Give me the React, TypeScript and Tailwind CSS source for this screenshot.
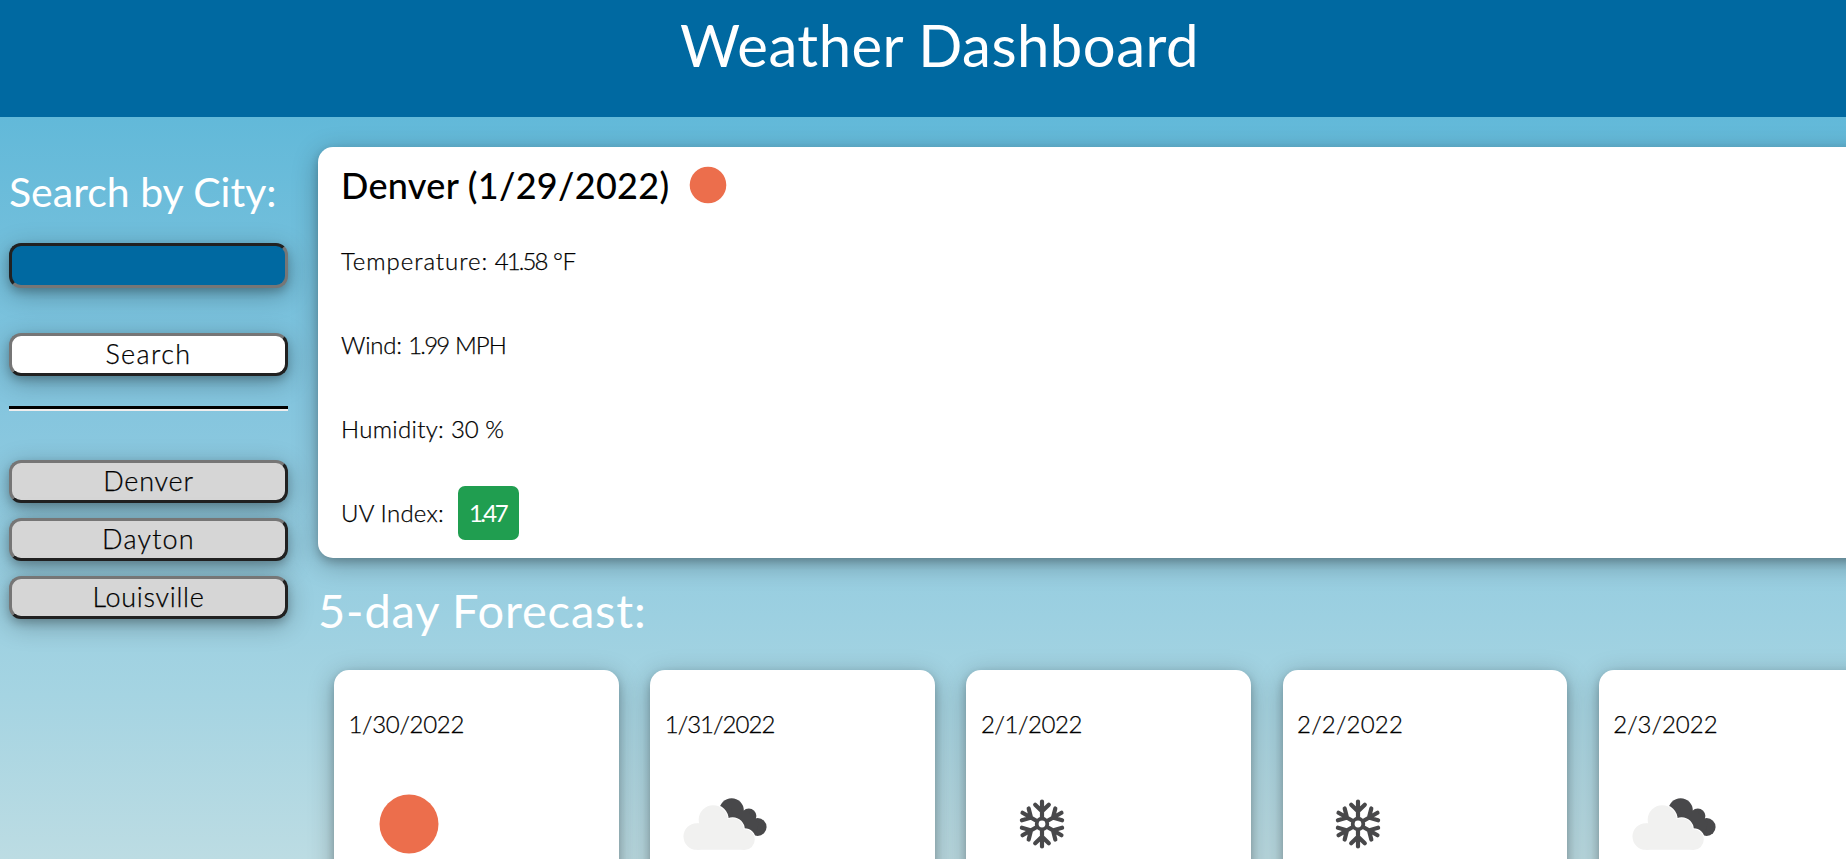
const days = [
  { date: "1/30/2022", icon: "sun", tracking: "tracking-[-0.3px]" },
  { date: "1/31/2022", icon: "cloud", tracking: "tracking-[-0.95px]" },
  { date: "2/1/2022", icon: "snow", tracking: "tracking-[-0.4px]" },
  { date: "2/2/2022", icon: "snow", tracking: "tracking-[0.2px]" },
  { date: "2/3/2022", icon: "cloud", tracking: "tracking-[0px]" },
];

const cities = [
  { name: "Denver", tracking: "tracking-[0.8px]" },
  { name: "Dayton", tracking: "tracking-[1.2px]" },
  { name: "Louisville", tracking: "tracking-[0.7px]" },
];

const shadow = "shadow-[0_4px_8px_rgba(0,0,0,0.2),0_6px_26px_rgba(0,0,0,0.28)]";
const thin = "font-light [-webkit-text-stroke:0.25px_#000]";
const outset =
  "h-[43px] w-[279px] rounded-[12px] border-3 border-t-[#767676] border-l-[#767676] border-r-[#212121] border-b-[#212121] pb-[2px] text-[27px] leading-[35px]";

function Sun({ className }: { className: string }) {
  return (
    <svg viewBox="0 0 100 100" className={className}>
      <circle cx="50" cy="50" r="29.5" fill="#ec6e4c" />
    </svg>
  );
}

function CloudShape() {
  return (
    <>
      <circle cx="21.8" cy="62.5" r="13.3" />
      <circle cx="38.2" cy="45.8" r="14.5" />
      <circle cx="57.6" cy="55.5" r="11.2" />
      <circle cx="69.5" cy="65.6" r="10.3" />
      <path d="M21.8 49.5H57L69.5 65V75.8H21.8Z" />
    </>
  );
}

function Cloud({ className }: { className: string }) {
  return (
    <svg viewBox="0 0 100 100" className={className}>
      <g fill="#48484a">
        <circle cx="56.6" cy="36.4" r="12.2" />
        <circle cx="73.8" cy="42" r="7.6" />
        <circle cx="82.6" cy="53" r="9" />
        <path d="M56 34L74 38L84 50L80 61.5L60 52Z" />
      </g>
      <g fill="#fff" stroke="#fff" strokeWidth="2">
        <CloudShape />
      </g>
      <g fill="#f1f1f0">
        <CloudShape />
      </g>
    </svg>
  );
}

function Snow({ className }: { className: string }) {
  return (
    <svg viewBox="0 0 100 100" className={className} fill="none" stroke="#48484a" strokeWidth="4.2" strokeLinecap="round">
      <circle cx="50" cy="50" r="5.3" strokeWidth="3.8" />
      {[0, 60, 120, 180, 240, 300].map((a) => (
        <path key={a} transform={`rotate(${a} 50 50)`} d="M50 44V27.5M43.2 30.7L50 37.3L56.8 30.7" />
      ))}
    </svg>
  );
}

const icons = { sun: Sun, cloud: Cloud, snow: Snow } as Record<string, typeof Sun>;

export default function App() {
  return (
    <div className="flex h-[859px] w-[1846px] flex-col overflow-hidden bg-[#62b9d9] font-['Lato',sans-serif] text-black">
      <header className="flex h-[117px] shrink-0 justify-center bg-[#0069a1] pl-[33px] pt-[9px]">
        <h1 className="text-[58px] leading-[72px] tracking-[0.48px] text-white">Weather Dashboard</h1>
      </header>
      <div className="flex h-[742px] bg-[linear-gradient(180deg,#62b9d9_0%,#84c5de_38%,#a5d4e2_78%,#bcdce3_100%)]">
        <aside className="flex w-[288px] shrink-0 flex-col pl-[9px]">
          <h2 className="mt-[49px] h-[53px] text-[41px] leading-[52px] whitespace-nowrap text-white">Search by City:</h2>
          <input className={`mt-[24px] h-[45px] w-[279px] rounded-[12px] border-3 border-t-[#212121] border-l-[#212121] border-r-[#767676] border-b-[#767676] bg-[#0069a1] ${shadow}`} />
          <button className={`mt-[45px] bg-white tracking-[1.4px] ${outset} ${shadow} ${thin}`}>Search</button>
          <div className="mt-[30px] h-[5px] border-t-3 border-b-2 border-t-black border-b-[#eee]" />
          <div className="mt-[49px] flex flex-col gap-[15px]">
            {cities.map((c) => (
              <button key={c.name} className={`bg-[#d6d6d6] ${c.tracking} ${outset} ${shadow} ${thin}`}>
                {c.name}
              </button>
            ))}
          </div>
        </aside>
        <main className="ml-[30px] flex w-[1600px] shrink-0 flex-col">
          <section className={`mt-[30px] h-[411px] shrink-0 rounded-[15px] bg-white pl-[23px] ${shadow}`}>
            <div className="flex h-[76px] items-center">
              <h2 className="w-[336px] text-[36px] font-medium tracking-[0.3px] whitespace-nowrap">Denver (1/29/2022)</h2>
              <Sun className="size-[62px]" />
            </div>
            <div className={`text-[24px] leading-[36px] ${thin}`}>
              <p className="mt-[20px] h-[36px]">
                <span className="tracking-[0.95px]">Temperature:</span> <span className="tracking-[-1.9px]">41.58</span> <span className="tracking-[-0.5px]">°F</span>
              </p>
              <p className="mt-[48px] h-[36px]">
                <span className="tracking-[-0.2px]">Wind: </span><span className="tracking-[-1.8px]">1.99</span> <span className="tracking-[-0.9px]">MPH</span>
              </p>
              <p className="mt-[48px] h-[36px]">
                <span className="tracking-[0.3px]">Humidity: </span>30 %
              </p>
            </div>
            <div className="mt-[39px] flex h-[54px] items-center text-[24px]">
              <p className={`w-[117px] tracking-[0.25px] ${thin}`}>UV Index:</p>
              <span className="flex h-[54px] w-[61px] items-center justify-center rounded-[7px] bg-[#209e50] pr-[2px] tracking-[-2.6px] text-white">1.47</span>
            </div>
          </section>
          <h2 className="mt-[20px] h-[66px] shrink-0 text-[47px] leading-[64px] tracking-[0.85px] text-white">5-day Forecast:</h2>
          <div className="mt-[26px] ml-[16px] flex shrink-0 gap-[31.7px]">
            {days.map((d) => {
              const Icon = icons[d.icon];
              return (
                <article key={d.date} className={`h-[400px] w-[284.5px] shrink-0 rounded-[15px] bg-white ${shadow}`}>
                  <p className={`mt-[36px] ml-[14.5px] h-[36px] text-[24px] leading-[36px] ${thin} ${d.tracking}`}>{d.date}</p>
                  <Icon className="mt-[31.5px] ml-[25.3px] size-[100px]" />
                </article>
              );
            })}
          </div>
        </main>
      </div>
    </div>
  );
}
